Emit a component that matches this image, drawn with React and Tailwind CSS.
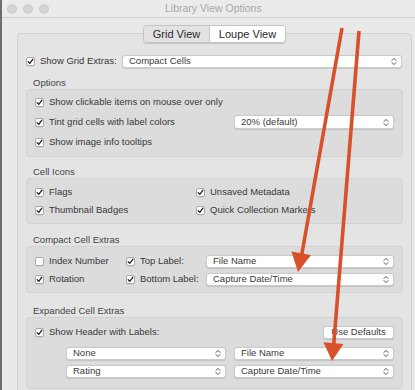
import React from "react";

const Check = ({ checked = true }) => (
  <span className="w-[9px] h-[9px] shrink-0 rounded-[2px] bg-white border border-[#ababab] flex items-center justify-center shadow-[0_0.5px_0.5px_rgba(0,0,0,0.12)]">
    {checked && (
      <svg width="7" height="7" viewBox="0 0 7 7">
        <path d="M1.2 3.8 L2.8 5.4 L5.9 1.2" fill="none" stroke="#222" strokeWidth="1.3" strokeLinecap="round" strokeLinejoin="round" />
      </svg>
    )}
  </span>
);

const CheckRow = ({ label, checked = true, className = "" }) => (
  <div className={`flex items-center gap-[5px] h-[14px] ${className}`}>
    <Check checked={checked} />
    <span className="whitespace-nowrap">{label}</span>
  </div>
);

const Chevrons = () => (
  <svg width="6" height="9" viewBox="0 0 6 9" className="shrink-0">
    <path d="M1 3.4 L3 1.4 L5 3.4 M1 5.6 L3 7.6 L5 5.6" fill="none" stroke="#505050" strokeWidth="1" strokeLinecap="round" strokeLinejoin="round" />
  </svg>
);

const Select = ({ text, className = "" }) => (
  <div className={`h-[13px] bg-white rounded-[3px] border border-[#cbcbcb] shadow-[0_0.5px_1px_rgba(0,0,0,0.12)] flex items-center justify-between pl-[6px] pr-[4px] ${className}`}>
    <span className="whitespace-nowrap text-[#3a3a3a]">{text}</span>
    <Chevrons />
  </div>
);

const SectionLabel = ({ children, className = "" }) => (
  <div className={`h-[12px] flex items-center pl-[7px] text-[#444] ${className}`}>{children}</div>
);

const Group = ({ children, className = "" }) => (
  <div className={`bg-[#dcdcdc] border border-[#d2d2d2] rounded-[4px] ${className}`}>{children}</div>
);

export default function App() {
  return (
    <div className="relative w-[415px] h-[390px] overflow-hidden bg-[#e9e9e9] border-l-2 border-[#6e6e6e] font-['Liberation_Sans',Arial,sans-serif] text-[9.5px] text-[#383838]">
      {/* Title bar */}
      <div className="h-[18px] border-b border-[#d3d3d3] bg-[#ebebeb] flex items-center">
        <div className="flex gap-[6px] pl-[5px]">
          <span className="w-[10px] h-[10px] rounded-full bg-[#d4d4d4] border border-[#cbcbcb]" />
          <span className="w-[10px] h-[10px] rounded-full bg-[#d4d4d4] border border-[#cbcbcb]" />
          <span className="w-[10px] h-[10px] rounded-full bg-[#d4d4d4] border border-[#cbcbcb]" />
        </div>
        <div className="ml-[116px] text-[10.5px] text-[#a8a8a8] whitespace-nowrap">Library View Options</div>
      </div>

      {/* Tab box */}
      <div className="ml-[15px] mt-[15px] w-[395px] h-[380px] bg-[#e4e4e4] border border-[#d2d2d2] rounded-[4px] px-[8px]">
        <div className="-mt-[9px] flex justify-center">
          <div className="flex h-[18px] rounded-[4px] border border-[#c4c4c4] shadow-[0_0.5px_1px_rgba(0,0,0,0.15)] overflow-hidden text-[11px] text-[#2a2a2a]">
            <div className="w-[66px] bg-[#e2e2e2] border-r border-[#c8c8c8] flex items-center justify-center">Grid View</div>
            <div className="w-[75px] bg-white flex items-center justify-center">Loupe View</div>
          </div>
        </div>

        <div className="mt-[11px] h-[14px] flex items-center">
          <div className="w-[96px] flex items-center gap-[5px]">
            <Check />
            <span className="whitespace-nowrap">Show Grid Extras:</span>
          </div>
          <Select text="Compact Cells" className="flex-1 mr-[1px]" />
        </div>

        {/* Options */}
        <SectionLabel className="mt-[9px]">Options</SectionLabel>
        <Group className="pl-[8px] pr-[8px] pt-[5px] pb-[7px] flex flex-col gap-[6px]">
          <CheckRow label="Show clickable items on mouse over only" />
          <div className="flex items-center justify-between h-[14px]">
            <div className="flex items-center gap-[5px]">
              <Check />
              <span>Tint grid cells with label colors</span>
            </div>
            <Select text="20% (default)" className="w-[160px] h-[14px]" />
          </div>
          <CheckRow label="Show image info tooltips" />
        </Group>

        {/* Cell Icons */}
        <SectionLabel className="mt-[9px]">Cell Icons</SectionLabel>
        <Group className="pl-[8px] pr-[8px] pt-[6px] pb-[6px] grid grid-cols-[161px_1fr] gap-y-[4px]">
          <CheckRow label="Flags" />
          <CheckRow label="Unsaved Metadata" />
          <CheckRow label="Thumbnail Badges" />
          <CheckRow label="Quick Collection Markers" />
        </Group>

        {/* Compact Cell Extras */}
        <SectionLabel className="mt-[10px]">Compact Cell Extras</SectionLabel>
        <Group className="pl-[8px] pr-[8px] pt-[7px] pb-[6px] flex flex-col gap-[4px]">
          <div className="flex items-center h-[14px]">
            <CheckRow label="Index Number" checked={false} className="w-[91px]" />
            <CheckRow label="Top Label:" className="w-[80px]" />
            <Select text="File Name" className="flex-1" />
          </div>
          <div className="flex items-center h-[14px]">
            <CheckRow label="Rotation" className="w-[91px]" />
            <CheckRow label="Bottom Label:" className="w-[80px]" />
            <Select text="Capture Date/Time" className="flex-1" />
          </div>
        </Group>

        {/* Expanded Cell Extras */}
        <SectionLabel className="mt-[12px]">Expanded Cell Extras</SectionLabel>
        <Group className="pl-[8px] pr-[8px] pt-[7px] pb-[10px] flex flex-col">
          <div className="flex items-center justify-between h-[14px]">
            <CheckRow label="Show Header with Labels:" />
            <div className="w-[71px] h-[13px] bg-white rounded-[3px] border border-[#cbcbcb] shadow-[0_0.5px_1px_rgba(0,0,0,0.12)] flex items-center justify-center text-[#3a3a3a]">
              Use Defaults
            </div>
          </div>
          <div className="mt-[8px] pl-[31px] grid grid-cols-[160px_160px] gap-x-[8px] gap-y-[5px]">
            <Select text="None" />
            <Select text="File Name" />
            <Select text="Rating" />
            <Select text="Capture Date/Time" />
          </div>
        </Group>
      </div>

      {/* Red annotation arrows */}
      <svg className="absolute top-0 -left-[2px] pointer-events-none" width="415" height="390" viewBox="0 0 415 390">
        <line x1="342" y1="28" x2="301.5" y2="256" stroke="#d8512a" strokeWidth="3.6" />
        <polygon points="311,255.1 291.4,251.5 298,272" fill="#d8512a" />
        <line x1="359" y1="31" x2="333.6" y2="346" stroke="#d8512a" strokeWidth="3.6" />
        <polygon points="343.5,343.9 323.5,342.3 332,361" fill="#d8512a" />
      </svg>
    </div>
  );
}
